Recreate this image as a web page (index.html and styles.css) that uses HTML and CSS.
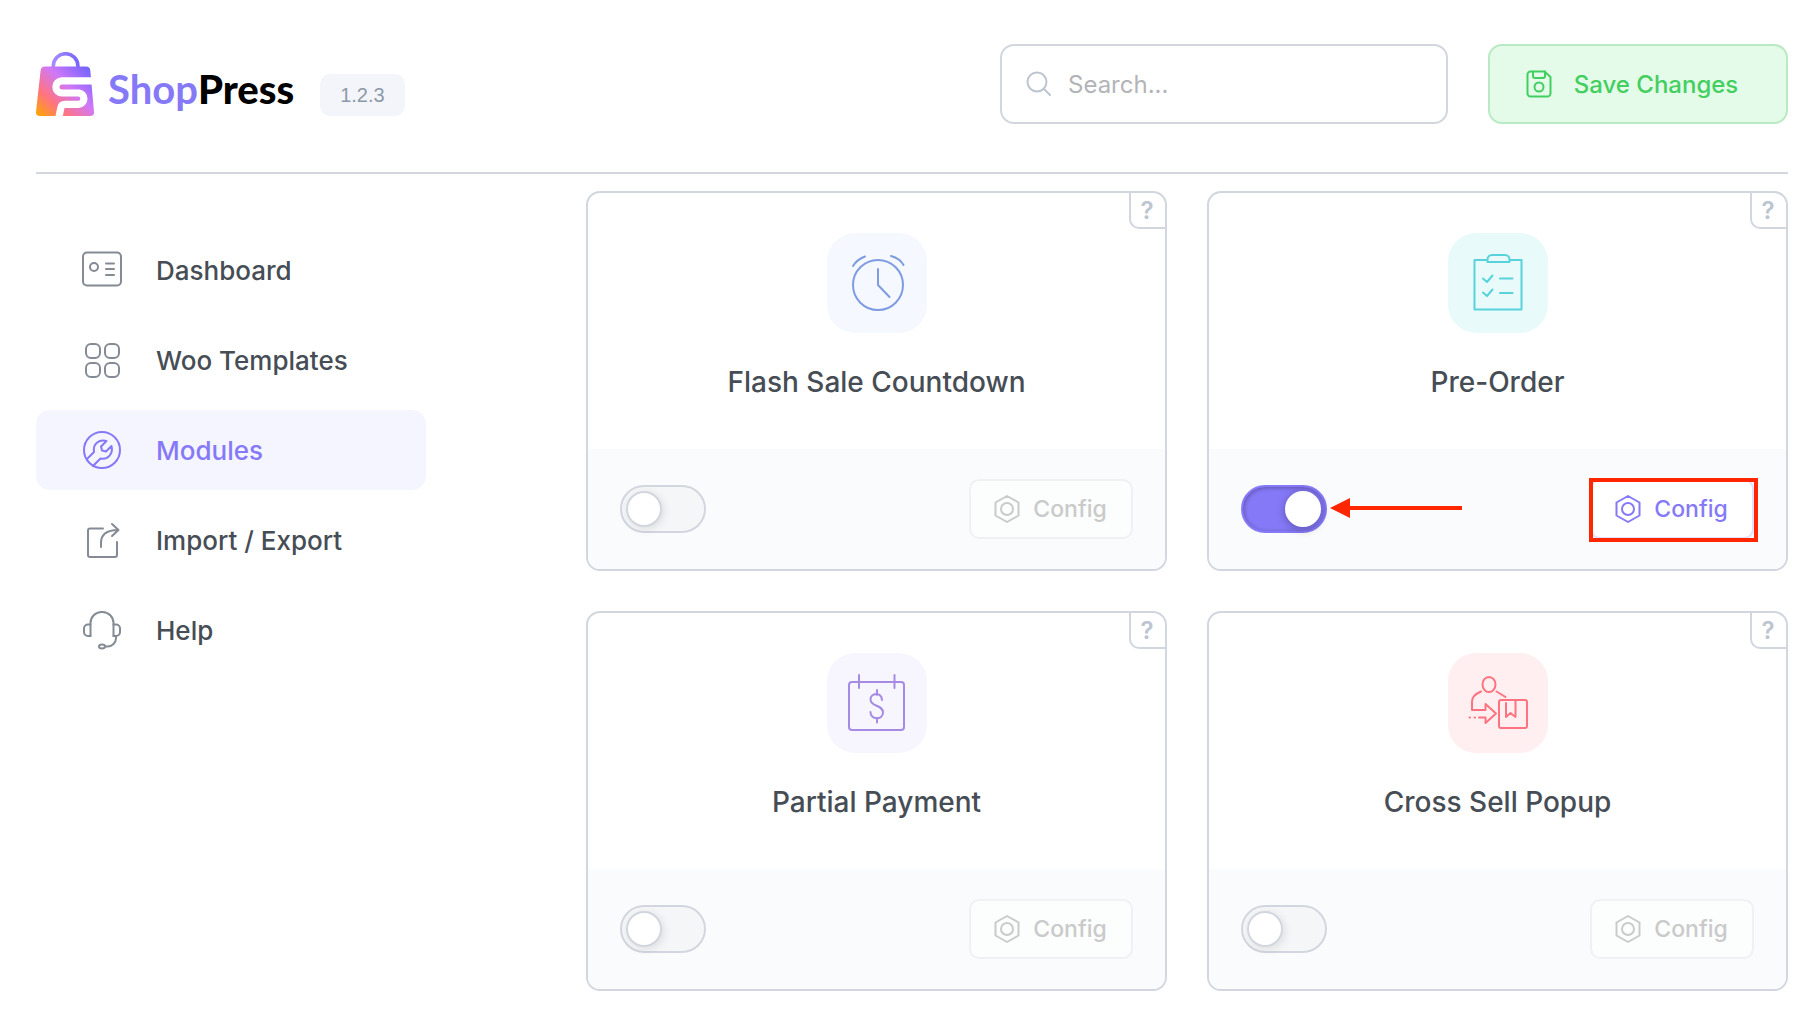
FILE: index.html
```html
<!DOCTYPE html>
<html lang="en">

<head>
    <meta charset="UTF-8">
    <meta name="viewport" content="width=device-width, initial-scale=1.0">
    <title>ShopPress</title>
    <link rel="stylesheet" href="styles.css">
</head>

<body>
    <!-- shared by all config buttons -->
    <svg class="sprite" aria-hidden="true">
        <symbol id="icon-config" viewBox="0 0 28 30">
            <path d="M14 2l11.5 6.5v13L14 28 2.500 21.500v-13z" />
            <circle cx="14" cy="15" r="6" />
        </symbol>
    </svg>

    <header class="header">
        <a class="brand" href="#">
            <svg class="brand-logo" viewBox="0 0 58 64">
                <defs>
                    <linearGradient id="bag" gradientUnits="userSpaceOnUse" x1="2" y1="62" x2="48" y2="14">
                        <stop offset="0" stop-color="#ffa20a" />
                        <stop offset=".28" stop-color="#ff7480" />
                        <stop offset=".62" stop-color="#d078f8" />
                        <stop offset="1" stop-color="#7865ff" />
                    </linearGradient>
                    <linearGradient id="handle" x1="0" y1="0" x2="1" y2="0">
                        <stop offset="0" stop-color="#a78bfa" />
                        <stop offset="1" stop-color="#7865ff" />
                    </linearGradient>
                </defs>
                <path d="M17.300 16v-2a12.300 12.300 0 0 1 24.600 0v2" fill="none" stroke="url(#handle)" stroke-width="3.600" />
                <path d="M9 14.500h41q4 0 4.300 4L58 60q.3 4-4 4H4q-4.300 0-4-4l4.600-41.500q.5-4 4.400-4z" fill="url(#bag)" />
                <path d="M58 28.800H26a6 6 0 0 0 0 12.200h17a5.700 5.700 0 0 1 0 11.300H29q-3.500 0-4 3L23 65" fill="none" stroke="#fff" stroke-width="7.200" />
            </svg>
            <span class="brand-name">Shop<b>Press</b></span>
        </a>
        <span class="version">1.2.3</span>

        <label class="search">
            <svg viewBox="0 0 26 26">
                <circle cx="11" cy="11" r="9.500" />
                <path d="M18 18l6 6" />
            </svg>
            <input type="search" placeholder="Search..." aria-label="Search">
        </label>
        <button class="save" type="button">
            <svg viewBox="0 0 26 28">
                <path d="M4 1.500h14.500L24.500 7v16.500a3 3 0 0 1-3 3h-17a3 3 0 0 1-3-3v-19a3 3 0 0 1 3-3z" />
                <path d="M7 1.500v4.500a2 2 0 0 0 2 2h8a2 2 0 0 0 2-2V1.500" />
                <circle cx="13" cy="17" r="4.500" />
            </svg>
            Save Changes
        </button>
    </header>

    <div class="wrap">
        <nav class="menu">
            <a href="#">
                <svg viewBox="0 0 40 40">
                    <rect x="1" y="2.500" width="38" height="33" rx="4" />
                    <circle cx="12" cy="17" r="4" />
                    <path d="M24 13.500h8M24 19h8M24 25h8" />
                </svg>
                Dashboard
            </a>
            <a href="#">
                <svg viewBox="0 0 40 40">
                    <rect x="4" y="4" width="14" height="14" rx="5" />
                    <rect x="23" y="4" width="14" height="14" rx="5" />
                    <rect x="4" y="23" width="14" height="14" rx="5" />
                    <rect x="23" y="23" width="14" height="14" rx="5" />
                </svg>
                Woo Templates
            </a>
            <a class="active" href="#">
                <svg viewBox="0 0 40 40">
                    <circle cx="20" cy="20" r="18" />
                    <path d="M5 29l7-7c-1.500-8 5-13 12.500-11l-5.500 5.500 1 4 4 1 5.500-5.500c2 8-4 14-11 12.500l-7.500 7.500" />
                </svg>
                Modules
            </a>
            <a href="#">
                <svg viewBox="0 0 40 40">
                    <path d="M21 8.500H8a2 2 0 0 0-2 2V35a2 2 0 0 0 2 2h25a2 2 0 0 0 2-2V22" />
                    <path d="M19 27V23C19 15 24 10 36 10M30 4l6.500 6L30 16" />
                </svg>
                Import / Export
            </a>
            <a href="#">
                <svg viewBox="0 0 40 40">
                    <path d="M8.500 26V13a11 11 0 0 1 11-11h1a11 11 0 0 1 11 11v13" />
                    <path d="M8.500 14.500H6a4 4 0 0 0-4 4v3.500a4 4 0 0 0 4 4h2.500M31.500 14.500H34a4 4 0 0 1 4 4v3.500a4 4 0 0 1-4 4h-2.500" />
                    <path d="M34 26.500v1.500a8.500 8.500 0 0 1-8.500 8.500H23" />
                    <ellipse cx="20" cy="36.500" rx="3" ry="2" />
                </svg>
                Help
            </a>
        </nav>

        <main class="modules">
            <section class="card">
                <a class="hint" href="#">?</a>
                <div class="card-body">
                    <svg class="tile blue" viewBox="0 0 100 100">
                        <circle cx="51" cy="52" r="25" />
                        <path d="M51 36v16l11.500 12M26 33q4-6.500 12-9.500M64 23q9 2.500 12.500 9" />
                    </svg>
                    <h3><label for="flash">Flash Sale Countdown</label></h3>
                </div>
                <div class="card-foot">
                    <input class="toggle" id="flash" type="checkbox">
                    <div class="config">
                        <button type="button" disabled><svg><use href="#icon-config" /></svg>Config</button>
                    </div>
                </div>
            </section>

            <section class="card">
                <a class="hint" href="#">?</a>
                <div class="card-body">
                    <svg class="tile cyan" viewBox="0 0 100 100">
                        <path d="M39 27H26.500v49.500h47V27H62" />
                        <path d="M39.500 29v-2.500a4.500 4.500 0 0 1 4.500-4.500h13a4.500 4.500 0 0 1 4.500 4.500V29z" />
                        <path d="M35 45.500l4 3.500 5.500-6.500M35 59.500l4 3.500 5.500-6.500M52 45.500h12.500M52 60h12.500" />
                    </svg>
                    <h3><label for="preorder">Pre-Order</label></h3>
                </div>
                <div class="card-foot">
                    <input class="toggle" id="preorder" type="checkbox" checked>
                    <svg class="arrow" viewBox="0 0 132 24">
                        <path d="M0 12L20 2v20z" />
                        <path d="M20 10h112v4H20z" />
                    </svg>
                    <div class="config marked">
                        <button type="button"><svg><use href="#icon-config" /></svg>Config</button>
                    </div>
                </div>
            </section>

            <section class="card">
                <a class="hint" href="#">?</a>
                <div class="card-body">
                    <svg class="tile purple" viewBox="0 0 100 100">
                        <rect x="22" y="29" width="55" height="48" rx="3" />
                        <path d="M32 22v13M67.500 22v13" />
                        <path d="M55 47c-.5-9-11.500-7-11.500-.5 0 7.500 12.500 5 12.500 13 0 8-13 7.500-12.500-.5M50 37v5M50 65v4.500" />
                    </svg>
                    <h3><label for="partial">Partial Payment</label></h3>
                </div>
                <div class="card-foot">
                    <input class="toggle" id="partial" type="checkbox">
                    <div class="config">
                        <button type="button" disabled><svg><use href="#icon-config" /></svg>Config</button>
                    </div>
                </div>
            </section>

            <section class="card">
                <a class="hint" href="#">?</a>
                <div class="card-body">
                    <svg class="tile red" viewBox="0 0 100 100">
                        <ellipse cx="41" cy="31.500" rx="6.500" ry="7.500" />
                        <rect x="51" y="47" width="28" height="28" rx="2" />
                        <path d="M33 38.500c-6 2.500-9 5-9 10V57h13.500v-6L48 60.500 37.500 70v-5.500H31M48.500 38.500l9 5.500" />
                        <path d="M58 50v14l4.500-4 5 4V47M21.500 64.500h.5M26.500 64.500h.5" />
                    </svg>
                    <h3><label for="crosssell">Cross Sell Popup</label></h3>
                </div>
                <div class="card-foot">
                    <input class="toggle" id="crosssell" type="checkbox">
                    <div class="config">
                        <button type="button" disabled><svg><use href="#icon-config" /></svg>Config</button>
                    </div>
                </div>
            </section>
        </main>
    </div>
</body>

</html>
```
FILE: styles.css
```css
*,
*::before,
*::after {
    box-sizing: border-box;
}

body {
    margin: 0;
    padding: 0 30px 32px 36px;
    background: #fff;
    color: #464d55;
    font-family: Inter, "Liberation Sans", sans-serif;
    font-weight: 500;
}

a {
    color: inherit;
    text-decoration: none;
}

svg {
    flex: none;
    fill: none;
    stroke: currentColor;
    stroke-width: 2;
    stroke-linecap: round;
    stroke-linejoin: round;
}

button,
input {
    font: inherit;
}

.sprite {
    position: absolute;
    width: 0;
    height: 0;
}

/* header */
.header {
    display: flex;
    align-items: center;
    padding: 44px 0 48px;
    border-bottom: 2px solid #d2d7df;
}

.brand {
    display: flex;
    align-items: center;
    gap: 14px;
}

.brand-logo {
    width: 58px;
    height: 64px;
    stroke: none;
    stroke-linecap: butt;
}

.brand-name {
    padding-top: 10px;
    color: #8679f8;
    font-family: Lato, sans-serif;
    font-size: 40px;
    font-weight: 700;
    line-height: 48px;
}

.brand-name b {
    color: #000;
}

.version {
    align-self: flex-end;
    margin: 0 auto 8px 26px;
    padding: 0 20px;
    border-radius: 10px;
    background: #f4f5fa;
    color: #8c9aa8;
    font-family: "Liberation Sans", sans-serif;
    font-size: 20px;
    font-weight: 400;
    line-height: 42px;
}

.search {
    display: flex;
    align-items: center;
    gap: 16px;
    width: 448px;
    height: 80px;
    padding: 0 24px;
    border: 2px solid #d2d7df;
    border-radius: 14px;
}

.search svg {
    width: 26px;
    height: 26px;
    color: #bcc5d0;
}

.search input {
    flex: 1;
    min-width: 0;
    padding: 0;
    border: 0;
    outline: 0;
    background: none;
    color: #464d55;
    font-size: 24px;
    font-weight: 400;
}

.search input::placeholder {
    color: #b2b4b8;
}

.save {
    display: flex;
    align-items: center;
    justify-content: center;
    gap: 22px;
    width: 300px;
    height: 80px;
    margin-left: 40px;
    padding: 0 12px 0 0;
    border: 2px solid #b9eac3;
    border-radius: 14px;
    background: #e5fbea;
    color: #43cf5f;
    font-size: 24px;
}

.save svg {
    width: 26px;
    height: 28px;
}

/* columns */
.wrap {
    display: flex;
    gap: 160px;
}

.menu {
    display: flex;
    flex-direction: column;
    flex: none;
    gap: 10px;
    width: 390px;
    padding-top: 56px;
}

.menu a {
    display: flex;
    align-items: center;
    gap: 34px;
    height: 80px;
    padding: 0 46px;
    border-radius: 14px;
    font-size: 26px;
}

.menu svg {
    width: 40px;
    height: 40px;
    color: #848b94;
}

.menu .active {
    background: #f5f5ff;
}

.menu .active,
.menu .active svg {
    color: #8679f8;
}

.modules {
    display: grid;
    flex: 1;
    grid-template-columns: 1fr 1fr;
    gap: 40px;
    padding-top: 17px;
}

/* module card */
.card {
    position: relative;
    overflow: hidden;
    border: 2px solid #d2d7df;
    border-radius: 14px;
}

.card-body {
    display: flex;
    flex-direction: column;
    align-items: center;
    gap: 28px;
    height: 256px;
    padding-top: 40px;
}

.card h3 {
    margin: 0;
    font-size: 28px;
    font-weight: 500;
    line-height: 42px;
}

.hint {
    position: absolute;
    top: 0;
    right: 0;
    width: 36px;
    height: 36px;
    padding-right: 2px;
    border: solid #d2d7df;
    border-width: 0 0 2px 2px;
    border-radius: 0 0 0 10px;
    color: #bcc5d0;
    font-size: 24px;
    font-weight: 600;
    line-height: 36px;
    text-align: center;
}

.tile {
    width: 100px;
    height: 100px;
    border-radius: 28px;
}

.blue {
    background: #f5f8ff;
    color: #7f9ce3;
}

.cyan {
    background: #e9fafb;
    color: #58d3dc;
}

.purple {
    background: #f7f6ff;
    color: #a58be4;
}

.red {
    background: #ffeff0;
    color: #ff7380;
}

.card-foot {
    position: relative;
    display: flex;
    align-items: center;
    justify-content: space-between;
    height: 120px;
    padding: 0 32px;
    background: #fafbfd;
}

.toggle {
    width: 86px;
    height: 48px;
    margin: 0;
    padding: 4px;
    border: 2px solid #d2d7df;
    border-radius: 24px;
    background: #f5f6f8;
    appearance: none;
}

.toggle::before {
    content: "";
    display: block;
    width: 36px;
    height: 36px;
    border: 2px solid #d2d7df;
    border-radius: 50%;
    background: #fff;
    box-shadow: 2px 2px 8px rgba(0, 0, 0, .1);
}

.toggle:checked {
    border-color: #8679f8;
    background: #8679f8;
    box-shadow: inset 1px 1px 4px rgba(0, 0, 0, .3);
}

.toggle:checked::before {
    margin-left: auto;
    border-color: #fff;
    box-shadow: 0 2px 10px rgba(0, 0, 0, .3);
}

.config {
    position: relative;
}

.config button {
    display: flex;
    align-items: center;
    justify-content: center;
    gap: 12px;
    width: 164px;
    height: 60px;
    padding: 0 2px 0 0;
    border: 2px solid #e4dfff;
    border-radius: 10px;
    background: #fff;
    color: #8679f8;
    font-size: 23px;
}

.config button:disabled {
    border-color: #f0f1f3;
    background: #fcfdfd;
    color: #cacaca;
}

.config svg {
    width: 28px;
    height: 30px;
}

/* red pointers over the enabled module */
.marked::after {
    content: "";
    position: absolute;
    top: -1px;
    right: -4px;
    bottom: -3px;
    left: -1px;
    border: 4px solid #ff2600;
    pointer-events: none;
}

.arrow {
    position: absolute;
    top: 47px;
    left: 121px;
    width: 132px;
    height: 24px;
    fill: #ff2600;
    stroke: none;
}
```
